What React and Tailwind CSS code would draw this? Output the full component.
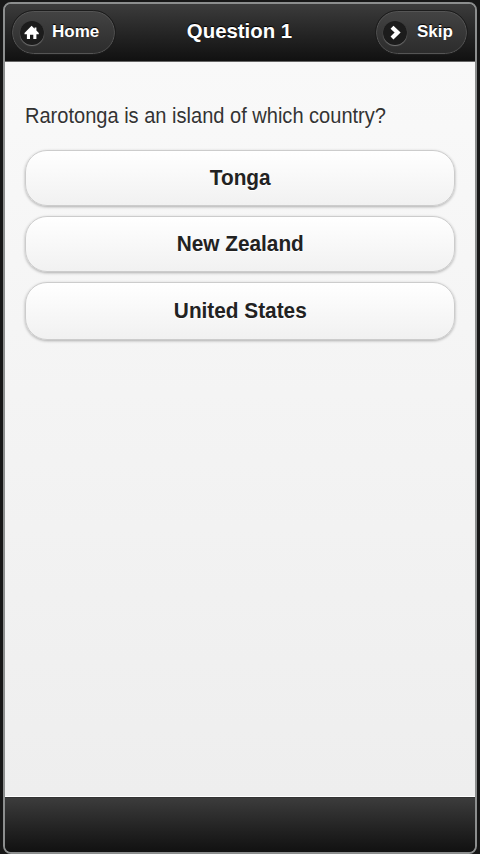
import React from 'react';

const answers = [
    { label: 'Tonga', className: 'h-[56px]' },
    { label: 'New Zealand', className: 'h-[56px] mt-[10px]' },
    { label: 'United States', className: 'h-[58px] mt-[10px]' },
];

const HomeIcon = () => (
    <svg width="16" height="16" viewBox="0 0 16 16" fill="#fff">
        <path d="M7.6 0.8 10.6 3.7V2.6h1.8v3L14.8 8v1.2h-2.4v4.9H9.3V9.8H6v4.3H2.9V9.2H.5V8Z" />
    </svg>
);

const ArrowIcon = () => (
    <svg width="16" height="16" viewBox="0 0 16 16" fill="none">
        <path d="M5 2.2 10.6 7.6 5 13" stroke="#fff" strokeWidth="4.2" />
    </svg>
);

const HeaderButton = ({ icon, label, className }) => (
    <button
        className={`flex h-[43px] items-center rounded-full border border-[#555] bg-linear-to-b from-[#434343] to-[#2c2c2c] outline outline-[#1c1c1c] ${className}`}
    >
        <span className="flex size-[24px] items-center justify-center rounded-full bg-[#1c1c1c] shadow-[0_1px_1px_#777]">
            {icon}
        </span>
        <span className="pb-px text-[17px] leading-[22px] font-bold text-white [text-shadow:0_-1px_1px_#000]">
            {label}
        </span>
    </button>
);

const App = () => (
    <div className="h-[854px] w-[480px] bg-[#171717] px-[3px] pt-[2px] font-['Liberation_Sans',Arial,sans-serif]">
        <div className="flex h-[852px] flex-col overflow-hidden rounded-[8px] border-2 border-[#8c8e8e] bg-[#222]">
            <header className="grid h-[58px] shrink-0 grid-cols-[1fr_auto_1fr] items-center border-b border-[#666] bg-linear-to-b from-[#3c3c3c] to-[#111] pr-[8px] pl-[7px]">
                <HeaderButton icon={<HomeIcon />} label="Home" className="w-[103px] gap-[8px] pl-[7px]" />
                <h1 className="pb-[3px] text-[20.4px] leading-6 font-bold text-white [text-shadow:0_-1px_1px_#000]">
                    Question 1
                </h1>
                <HeaderButton icon={<ArrowIcon />} label="Skip" className="w-[91px] justify-self-end gap-[10px] pl-[6px]" />
            </header>

            <main className="flex-1 border-b border-white bg-linear-to-b from-[#f9f9f9] to-[#eee] px-[20px] pt-[40px]">
                <p className="h-[48px] w-max origin-left scale-x-[0.911] text-[22px] leading-[28px] text-[#333] [text-shadow:0_1px_0_#fff]">
                    Rarotonga is an island of which country?
                </p>
                {answers.map((answer) => (
                    <button
                        key={answer.label}
                        className={`flex w-full items-center justify-center rounded-[22px] border border-[#ccc] bg-linear-to-b from-white to-[#f1f1f1] shadow-[0_1px_3px_rgba(0,0,0,0.3)] ${answer.className}`}
                    >
                        <span className="scale-x-[0.945] text-[22px] leading-7 font-bold text-[#222] [text-shadow:0_1px_0_#fff]">
                            {answer.label}
                        </span>
                    </button>
                ))}
            </main>

            <footer className="h-[55px] shrink-0 border-t border-[#333] bg-linear-to-b from-[#3c3c3c] to-[#111]" />
        </div>
    </div>
);

export default App;
